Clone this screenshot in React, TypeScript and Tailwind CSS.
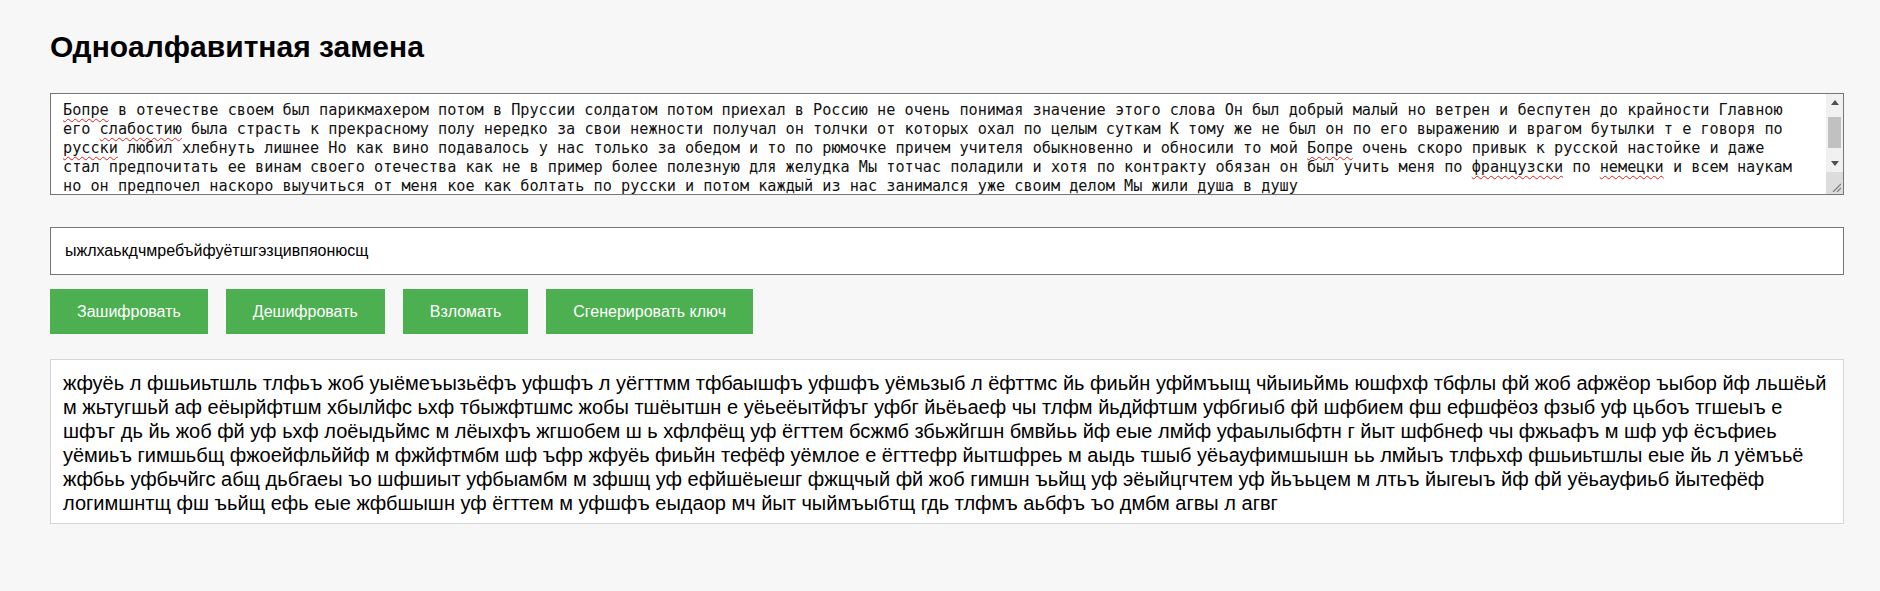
import React from "react";

const PLAIN =
  "Бопре в отечестве своем был парикмахером потом в Пруссии солдатом потом приехал в Россию не очень понимая значение этого слова Он был добрый малый но ветрен и беспутен до крайности Главною его слабостию была страсть к прекрасному полу нередко за свои нежности получал он толчки от которых охал по целым суткам К тому же не был он по его выражению и врагом бутылки т е говоря по русски любил хлебнуть лишнее Но как вино подавалось у нас только за обедом и то по рюмочке причем учителя обыкновенно и обносили то мой Бопре очень скоро привык к русской настойке и даже стал предпочитать ее винам своего отечества как не в пример более полезную для желудка Мы тотчас поладили и хотя по контракту обязан он был учить меня по французски по немецки и всем наукам но он предпочел наскоро выучиться от меня кое как болтать по русски и потом каждый из нас занимался уже своим делом Мы жили душа в душу";

const ALPHA = "абвгдеёжзийклмнопрстуфхцчшщъыьэюя";
const KEY = "ыжлхаькдчмребъйфуётшгэзцивпяонюсщ";

function encrypt(text: string): string {
  return text
    .toLowerCase()
    .split("")
    .map((c) => {
      const i = ALPHA.indexOf(c);
      return i >= 0 ? KEY[i] : c;
    })
    .join("");
}

const MISSPELLED = new Set(["Бопре", "слабостию", "русски", "французски", "немецки"]);

function SpellText({ text }: { text: string }) {
  const words = text.split(" ");
  return (
    <>
      {words.map((w, i) => (
        <React.Fragment key={i}>
          {MISSPELLED.has(w) ? (
            <span className="underline decoration-wavy decoration-[#e0201a] decoration-1 underline-offset-[3px]">
              {w}
            </span>
          ) : (
            w
          )}
          {i < words.length - 1 ? " " : ""}
        </React.Fragment>
      ))}
    </>
  );
}

function Scrollbar() {
  return (
    <div className="flex w-[17px] shrink-0 flex-col bg-[#f1f1f1]">
      <div className="flex h-[17px] items-center justify-center">
        <svg width="8" height="5" viewBox="0 0 8 5">
          <path d="M0 5 L4 0 L8 5 Z" fill="#505050" />
        </svg>
      </div>
      <div className="flex-1 px-[2px] pt-[6px]">
        <div className="h-[31px] bg-[#c1c1c1]" />
      </div>
      <div className="flex h-[17px] items-center justify-center">
        <svg width="8" height="5" viewBox="0 0 8 5">
          <path d="M0 0 L8 0 L4 5 Z" fill="#505050" />
        </svg>
      </div>
      <div className="relative h-[22px] bg-[#dcdcdc]">
        <svg className="absolute bottom-[2px] right-[2px]" width="9" height="9" viewBox="0 0 9 9">
          <path d="M1 9 L9 1 M5 9 L9 5" stroke="#7a7a7a" strokeWidth="1.2" />
        </svg>
      </div>
    </div>
  );
}

export default function App() {
  const cipher = encrypt(PLAIN);
  return (
    <div className="min-h-screen bg-[#f7f7f7] pl-[50px] pr-[36px] pt-[30px] font-['Liberation_Sans',Arial,sans-serif] text-black">
      <h1 className="text-[30px] font-bold leading-[34px] text-black">Одноалфавитная замена</h1>

      <div className="mt-[29px] flex h-[102px] border border-[#767676] bg-white">
        <div
          role="textbox"
          className="min-w-0 flex-1 overflow-hidden whitespace-pre-wrap pl-[12px] pr-[16px] pt-[7px] font-['DejaVu_Sans_Mono',monospace] text-[15.2px] leading-[19px] text-[#111]"
        >
          <SpellText text={PLAIN} />
        </div>
        <Scrollbar />
      </div>

      <input
        readOnly
        value={KEY}
        className="mt-[32px] block h-[48px] w-full border border-[#767676] bg-white px-[14px] text-[16px] text-black outline-none"
      />

      <div className="mt-[14px] flex gap-[18px]">
        {["Зашифровать", "Дешифровать", "Взломать", "Сгенерировать ключ"].map((t) => (
          <button
            key={t}
            className="h-[45px] bg-[#4caf50] px-[27px] text-[16px] text-white"
          >
            {t}
          </button>
        ))}
      </div>

      <div className="mt-[25px] border border-[#d6d6d6] bg-white px-[12px] pb-[8px] pt-[11px] text-[20px] leading-[24px] text-black">
        {cipher}
      </div>
    </div>
  );
}
